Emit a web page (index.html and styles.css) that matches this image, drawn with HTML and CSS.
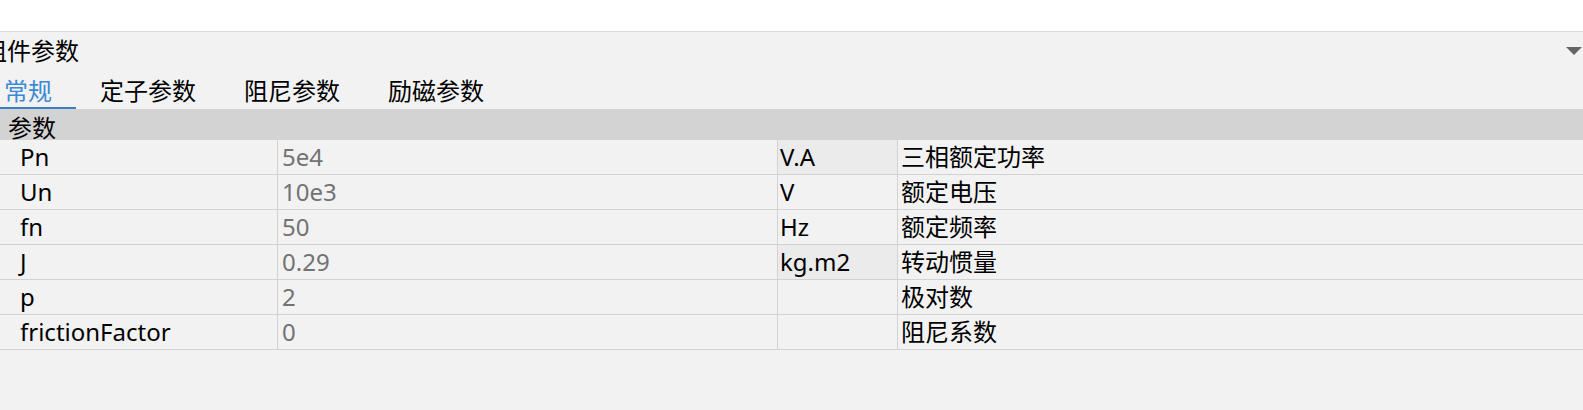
FILE: index.html
```html
<!DOCTYPE html>
<html lang="zh-CN">
<head>
<meta charset="utf-8">
<title>组件参数</title>
<link rel="stylesheet" href="styles.css">
</head>
<body>
<div class="topbar"></div>
<div class="panel">
  <div class="title-row">
    <span class="title">组件参数</span>
    <span class="caret"></span>
  </div>
  <div class="tabs">
    <div class="tab active">常规</div>
    <div class="tab">定子参数</div>
    <div class="tab">阻尼参数</div>
    <div class="tab">励磁参数</div>
  </div>
  <div class="table">
    <div class="group">参数</div>
    <div class="row">
      <div class="cell name">Pn</div>
      <div class="cell value">5e4</div>
      <div class="cell unit shaded">V.A</div>
      <div class="cell desc">三相额定功率</div>
    </div>
    <div class="row">
      <div class="cell name">Un</div>
      <div class="cell value">10e3</div>
      <div class="cell unit">V</div>
      <div class="cell desc">额定电压</div>
    </div>
    <div class="row">
      <div class="cell name">fn</div>
      <div class="cell value">50</div>
      <div class="cell unit">Hz</div>
      <div class="cell desc">额定频率</div>
    </div>
    <div class="row">
      <div class="cell name">J</div>
      <div class="cell value">0.29</div>
      <div class="cell unit shaded">kg.m2</div>
      <div class="cell desc">转动惯量</div>
    </div>
    <div class="row">
      <div class="cell name">p</div>
      <div class="cell value">2</div>
      <div class="cell unit"></div>
      <div class="cell desc">极对数</div>
    </div>
    <div class="row">
      <div class="cell name">frictionFactor</div>
      <div class="cell value">0</div>
      <div class="cell unit"></div>
      <div class="cell desc">阻尼系数</div>
    </div>
  </div>
</div>
</body>
</html>
```

FILE: styles.css
```css
* {
  box-sizing: border-box;
}

html, body {
  margin: 0;
  padding: 0;
  background: #f2f2f2;
  overflow: hidden;
}

body {
  font-family: "Noto Sans", "Noto Sans CJK SC", sans-serif;
  font-size: 24px;
  color: #000;
}

.topbar {
  height: 32px;
  background: #ffffff;
  border-bottom: 1px solid #d9d9d9;
}

.panel {
  margin-left: -20px;
  width: calc(100% + 20px);
}

.title-row {
  display: flex;
  align-items: center;
  justify-content: space-between;
  height: 38px;
  padding-left: 3px;
  padding-right: 1px;
}

.title {
  line-height: 38px;
  white-space: nowrap;
}

.caret {
  width: 0;
  height: 0;
  border-left: 8px solid transparent;
  border-right: 8px solid transparent;
  border-top: 8px solid #666666;
}

.tabs {
  display: flex;
  height: 39px;
}

.tab {
  padding: 4px 24px 0;
  line-height: 33px;
  border-bottom: 2px solid transparent;
  white-space: nowrap;
}

.tab.active {
  color: #3c8ad6;
  border-bottom-color: #3a7fc4;
}

.group {
  height: 31px;
  background: #d3d3d3;
  padding: 6px 0 0 28px;
  line-height: 25px;
}

.row {
  display: grid;
  grid-template-columns: 298px 500px 120px 1fr;
  height: 35px;
  border-bottom: 1px solid #d2d2d2;
}

.cell {
  line-height: 34px;
  white-space: nowrap;
  overflow: hidden;
}

.name {
  padding-left: 40px;
  border-right: 1px solid #d2d2d2;
}

.value {
  padding-left: 4px;
  color: #737373;
  border-right: 1px solid #d2d2d2;
}

.unit {
  padding-left: 2px;
  border-right: 1px solid #d2d2d2;
}

.unit.shaded {
  background: #ebebeb;
}

.desc {
  padding-left: 3px;
}
```
